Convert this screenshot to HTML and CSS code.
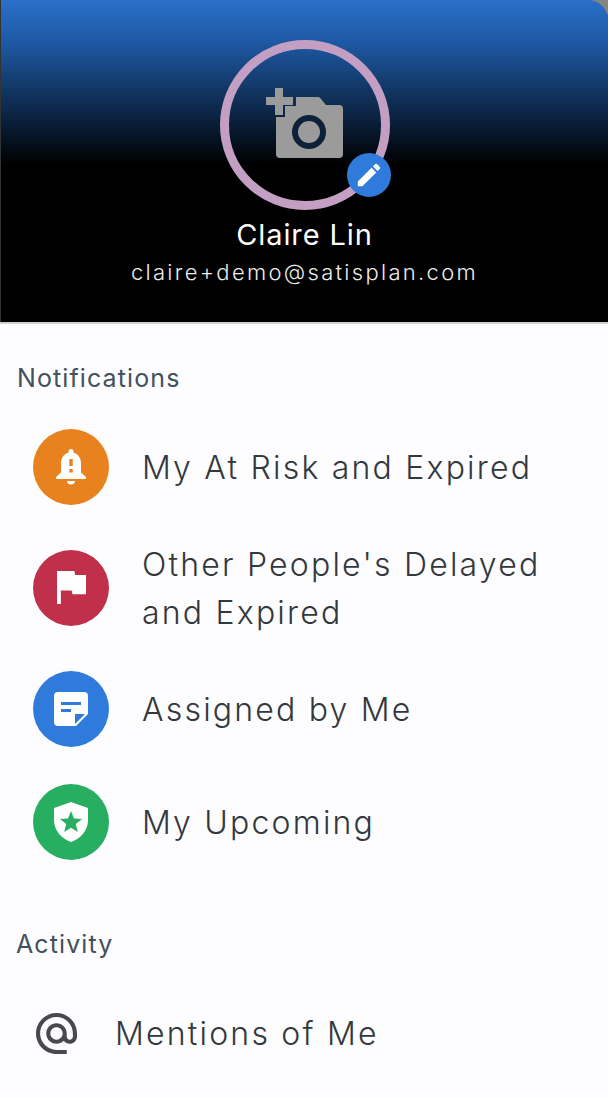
FILE: index.html
```html
<!DOCTYPE html>
<html>

<head>
	<title>Profile</title>
	<meta charset="UTF-8" />
	<link rel="stylesheet" href="styles.css">
</head>

<body>

<header class="profile">
	<div class="avatar">
		<svg class="camera" viewBox="0 0 80 72" width="80" height="72">
			<path fill="#9b9b9b" d="M32 9h22a3 3 0 0 1 2.400 1.200L62 17h13a4 4 0 0 1 4 4v45a4 4 0 0 1-4 4H16a4 4 0 0 1-4-4V29h9V18h11z" />
			<path fill="#9b9b9b" d="M11 0h8v9h10v8H19v10h-8V17H2V9h9z" />
			<circle cx="45" cy="44" r="14" fill="#9b9b9b" stroke="#0d2138" stroke-width="6" />
		</svg>
		<span class="edit-badge">
			<svg viewBox="0 0 24 24" width="30" height="30">
				<path fill="#fff" d="M3 17.250V21h3.750L17.810 9.940l-3.750-3.750L3 17.250zM20.710 7.040c.39-.39.39-1.020 0-1.410l-2.340-2.340c-.39-.39-1.020-.39-1.410 0l-1.830 1.830 3.750 3.750 1.830-1.830z" />
			</svg>
		</span>
	</div>
	<div class="name">Claire Lin</div>
	<div class="email">claire+demo@satisplan.com</div>
</header>

<section class="group">
	<h2 class="group-title">Notifications</h2>

	<div class="row">
		<span class="badge orange">
			<svg viewBox="0 0 30 36" width="30" height="36">
				<path fill="#fff" fill-rule="evenodd" d="M15 0c1.500 0 2.500 1 2.500 2.500v1.300C22.500 5 25 9.500 25 14.500v9l5 4.500v2H0v-2l5-4.500v-9C5 9.500 7.500 5 12.500 3.800V2.500C12.500 1 13.500 0 15 0zM13.300 10v7h3.400v-7zM13.300 20v3.500h3.400V20z" />
				<path fill="#fff" d="M11 32h8c0 2-1.800 3.500-4 3.500s-4-1.500-4-3.500z" />
			</svg>
		</span>
		<span class="row-text">My At Risk and Expired</span>
	</div>

	<div class="row">
		<span class="badge red">
			<svg viewBox="5 4 15 17" width="29" height="33">
				<path fill="#fff" d="M14.400 6L14 4H5v17h2v-7h5.600l.4 2h7V6z" />
			</svg>
		</span>
		<span class="row-text">Other People's Delayed and Expired</span>
	</div>

	<div class="row">
		<span class="badge blue">
			<svg viewBox="0 0 34 34" width="34" height="34">
				<path fill="#fff" d="M4 0h26a4 4 0 0 1 4 4v18L22 34H4a4 4 0 0 1-4-4V4a4 4 0 0 1 4-4z" />
				<path fill="#2f7bdb" d="M7 10h20v3H7zM7 17h10v3H7zM21 32V22h10z" />
			</svg>
		</span>
		<span class="row-text">Assigned by Me</span>
	</div>

	<div class="row">
		<span class="badge green">
			<svg viewBox="0 0 34 40" width="34" height="40">
				<path fill="#fff" d="M17 0l17 6v12c0 10-7 18.500-17 22C7 36.500 0 28 0 18V6z" />
				<path fill="#27ae60" d="M17 9l3 7.500 8 .5-6.200 5 2 8-6.800-4.300-6.800 4.300 2-8L6 17l8-.5z" />
			</svg>
		</span>
		<span class="row-text">My Upcoming</span>
	</div>
</section>

<section class="group activity">
	<h2 class="group-title">Activity</h2>

	<div class="row plain">
		<svg class="at" viewBox="2 2 20 20" width="41" height="41">
			<path fill="#48494d" d="M12 2C6.480 2 2 6.480 2 12s4.480 10 10 10h5v-2h-5c-4.340 0-8-3.660-8-8s3.660-8 8-8 8 3.660 8 8v1.430c0 .79-.71 1.570-1.500 1.570s-1.500-.78-1.500-1.570V12c0-2.760-2.240-5-5-5s-5 2.240-5 5 2.240 5 5 5c1.380 0 2.640-.56 3.540-1.470.65.89 1.770 1.470 2.960 1.470 1.970 0 3.500-1.600 3.500-3.570V12c0-5.520-4.480-10-10-10zm0 13c-1.660 0-3-1.340-3-3s1.340-3 3-3 3 1.340 3 3-1.340 3-3 3z" />
		</svg>
		<span class="row-text">Mentions of Me</span>
	</div>
</section>

</body>

</html>
```

FILE: styles.css
```css
html, body {
  height: 100%;
  overflow: hidden;
}

body {
  margin: 0;
  background: #fdfdff;
  font-family: "Inter", "Liberation Sans", sans-serif;
  color: #33383d;
}

.profile {
  position: relative;
  box-sizing: border-box;
  height: 324px;
  padding-top: 40px;
  background: linear-gradient(#2a6fc9 0, #1f5aa6 40px, #0f2f57 100px, #000 165px);
  border-bottom: 2px solid #cfcfcf;
  box-shadow: inset 1px 0 0 #333;
  text-align: center;
  color: #fff;
}

/* rounded window corner, top right */
.profile::after {
  content: "";
  position: absolute;
  top: 0;
  right: 0;
  width: 20px;
  height: 14px;
  background: radial-gradient(circle at 0 20px, transparent 19.500px, #85857f 20.500px);
}

.avatar {
  position: relative;
  box-sizing: border-box;
  width: 170px;
  height: 170px;
  margin: 0 auto;
  transform: translateX(1px);
  border: 9px solid #c3a0c3;
  border-radius: 50%;
}

.camera {
  display: block;
  margin: 39px 0 0 35px;
}

.edit-badge {
  position: absolute;
  right: -10px;
  bottom: 4px;
  display: flex;
  align-items: center;
  justify-content: center;
  width: 44px;
  height: 44px;
  border-radius: 50%;
  background: #2f7bdb;
}

.name {
  margin-top: 7px;
  padding-left: 1px;
  font-size: 29px;
  line-height: 36px;
  font-weight: 400;
  letter-spacing: 0.9px;
}

.email {
  margin-top: 2px;
  padding-left: 1px;
  font-size: 22px;
  line-height: 34px;
  font-weight: 300;
  letter-spacing: 2.3px;
  color: #ececec;
}

.group {
  padding-top: 37px;
}

.group-title {
  margin: 0;
  padding-left: 17px;
  font-size: 25px;
  line-height: 34px;
  font-weight: 400;
  letter-spacing: 1.1px;
  color: #44505c;
}

.row {
  display: flex;
  align-items: center;
  padding-left: 33px;
  min-height: 113px;
}

.group-title + .row {
  margin-top: 15px;
}

.badge {
  display: flex;
  flex: none;
  align-items: center;
  justify-content: center;
  width: 76px;
  height: 76px;
  border-radius: 50%;
}

.orange { background: #e8821e; }
.red { background: #c0304a; }
.blue { background: #2f7bdb; }
.green { background: #27ae60; }

.row-text {
  box-sizing: border-box;
  width: 440px;
  padding: 17.500px 0 15.500px 33px;
  font-size: 32px;
  line-height: 48px;
  font-weight: 300;
  letter-spacing: 2.2px;
}

.activity {
  padding-top: 49px;
}

.activity .group-title {
  padding-left: 16px;
}

.activity .group-title + .row {
  margin-top: 16px;
}

.plain {
  padding-left: 36px;
}

.at {
  flex: none;
}

.plain .row-text {
  padding: 16.500px 0 16.500px 38px;
}
```
